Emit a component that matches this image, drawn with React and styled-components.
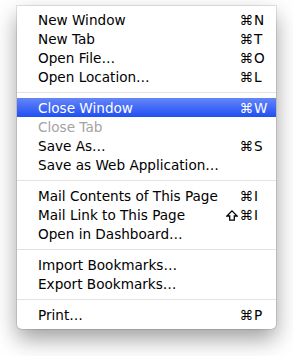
import styled, { createGlobalStyle } from "styled-components";

const Global = createGlobalStyle`
  html, body {
    margin: 0;
    padding: 0;
    background: #ffffff;
  }
  body {
    font-family: "DejaVu Sans", "Liberation Sans", sans-serif;
  }
`;

const Page = styled.div`
  width: 293px;
  height: 356px;
  padding: 6px 0 0 17px;
  box-sizing: border-box;
`;

const Menu = styled.div`
  width: 259px;
  height: 323px;
  box-sizing: border-box;
  padding: 4px 0 5px;
  background: #ffffff;
  border-radius: 0 0 5px 5px;
  box-shadow: 0 0 0 1px rgba(0, 0, 0, 0.1), 0 10px 22px rgba(0, 0, 0, 0.38);
  display: flex;
  flex-direction: column;
`;

const Row = styled.div`
  display: grid;
  grid-template-columns: 1fr auto 23px;
  align-items: center;
  height: 19px;
  line-height: 19px;
  padding-left: 21px;
  font-size: 13.6px;
  color: ${(p) => (p.$active ? "#ffffff" : p.$disabled ? "#a3a3a3" : "#000000")};
  background: ${(p) =>
    p.$active ? "linear-gradient(#6585f8, #1f4ff3)" : "transparent"};
  white-space: nowrap;
`;

const Label = styled.span`
  padding-top: 1px;
`;

const Mods = styled.span`
  display: flex;
  align-items: center;
  justify-content: flex-end;
  gap: 1px;
`;

const Key = styled.span`
  text-align: left;
  padding-left: 1px;
`;

const Separator = styled.div`
  height: 12px;
  display: flex;
  align-items: center;
  &::after {
    content: "";
    flex: 1;
    height: 1px;
    background: #e2e2e2;
  }
`;

const ShiftIcon = () => (
  <svg width="12" height="11" viewBox="0 0 12 11">
    <path
      d="M6 0.9 L11.1 6 H8.3 V10.2 H3.7 V6 H0.9 Z"
      fill="none"
      stroke="currentColor"
      strokeWidth="1.3"
      strokeLinejoin="miter"
    />
  </svg>
);

const groups = [
  [
    { label: "New Window", key: "N" },
    { label: "New Tab", key: "T" },
    { label: "Open File…", key: "O" },
    { label: "Open Location…", key: "L" },
  ],
  [
    { label: "Close Window", key: "W", active: true },
    { label: "Close Tab", disabled: true },
    { label: "Save As…", key: "S" },
    { label: "Save as Web Application…" },
  ],
  [
    { label: "Mail Contents of This Page", key: "I" },
    { label: "Mail Link to This Page", key: "I", shift: true },
    { label: "Open in Dashboard…" },
  ],
  [
    { label: "Import Bookmarks…" },
    { label: "Export Bookmarks…" },
  ],
  [{ label: "Print…", key: "P" }],
];

export default function App() {
  return (
    <>
      <Global />
      <Page>
        <Menu>
          {groups.map((items, gi) => (
            <div key={gi}>
              {gi > 0 && <Separator />}
              {items.map((it) => (
                <Row key={it.label} $active={it.active} $disabled={it.disabled}>
                  <Label>{it.label}</Label>
                  <Mods>
                    {it.shift && <ShiftIcon />}
                    {it.key && <span>⌘</span>}
                  </Mods>
                  <Key>{it.key || ""}</Key>
                </Row>
              ))}
            </div>
          ))}
        </Menu>
      </Page>
    </>
  );
}
